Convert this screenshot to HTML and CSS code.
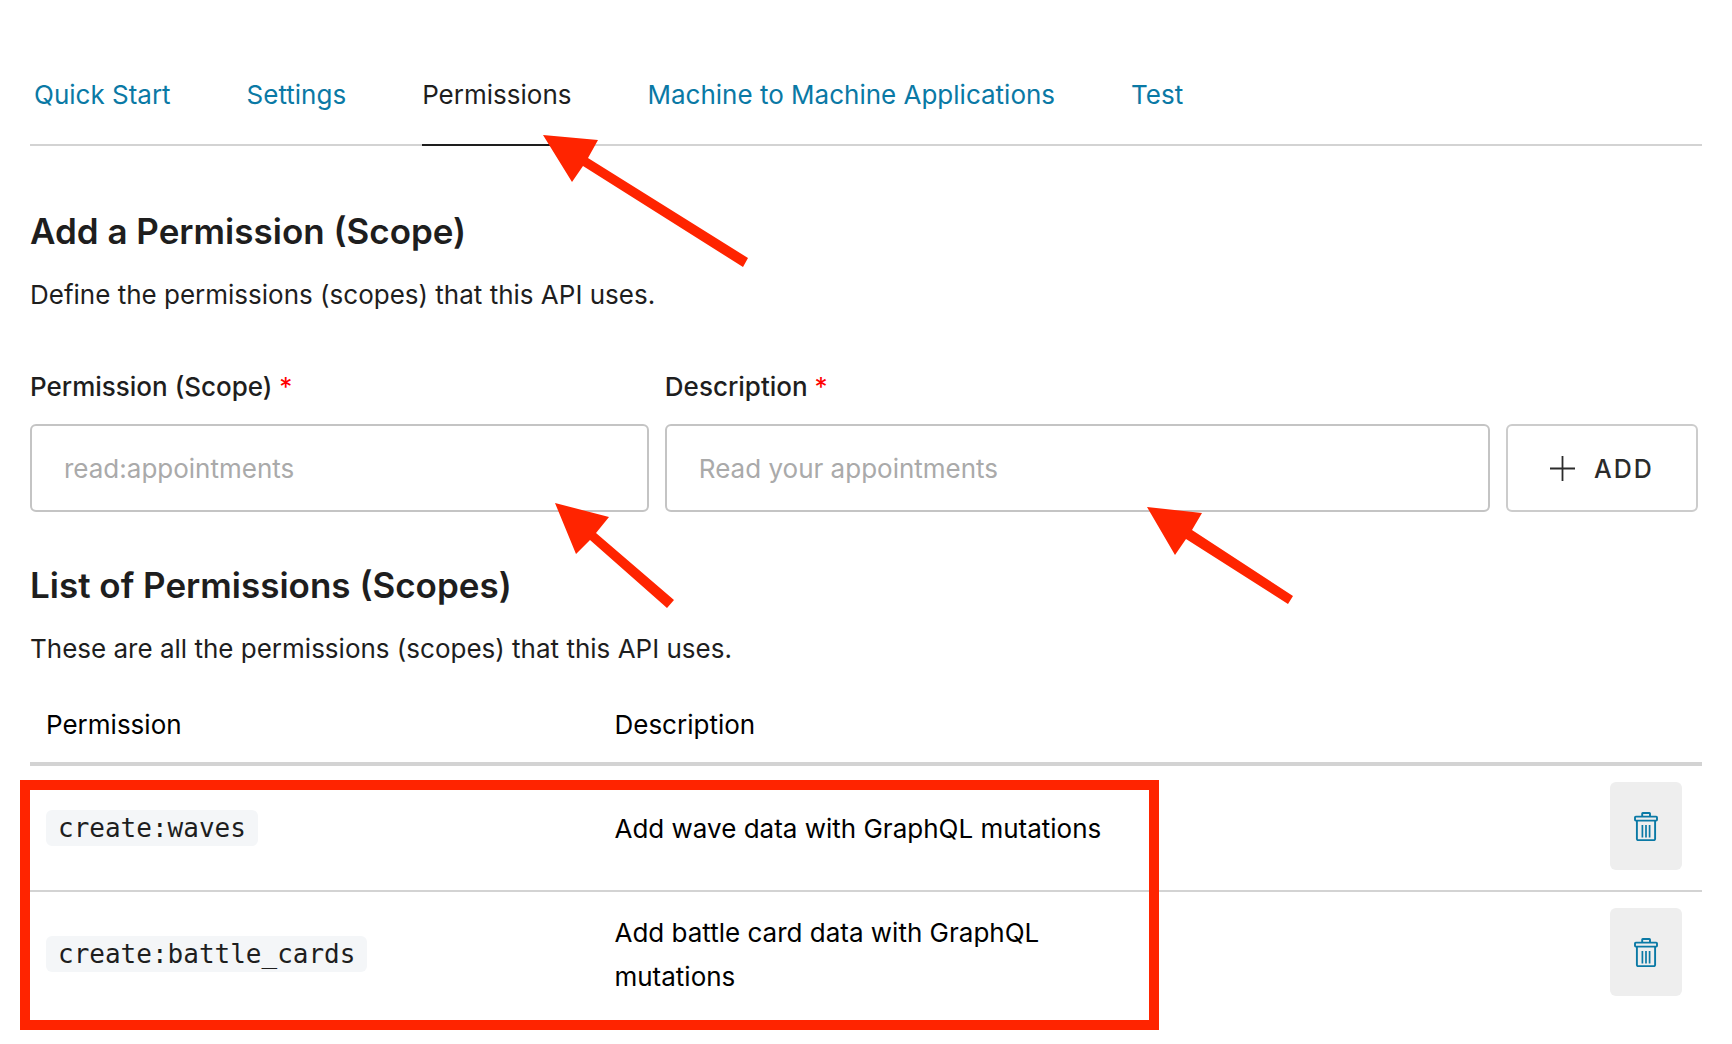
FILE: index.html
```
<!DOCTYPE html>
<html lang="en">
<head>
  <meta charset="utf-8">
  <meta name="viewport" content="width=device-width, initial-scale=1">
  <title>API Permissions</title>
  <link rel="stylesheet" href="styles.css">
</head>
<body>
  <svg class="sprite" aria-hidden="true">
    <symbol id="trash" viewBox="0 0 24 29">
      <g fill="none" stroke="currentColor" stroke-width="1.9">
        <path d="M8.2 4.4V1.6Q8.2 1 8.8 1h6.6q.6 0 .6.6v2.8"/>
        <rect x="1" y="4.6" width="22" height="4" rx="0.8"/>
        <path d="M2.9 8.6V27q0 1.1 1.1 1.1h16q1.1 0 1.1-1.1V8.6"/>
        <path d="M8.4 13v12.6M12 13v12.6M15.6 13v12.6" stroke-width="1.7"/>
      </g>
    </symbol>
  </svg>

  <main class="page">
    <nav class="tabs" aria-label="API sections">
      <a class="tab" href="#quick-start">Quick Start</a>
      <a class="tab" href="#settings">Settings</a>
      <a class="tab tab-active" href="#permissions" aria-current="page">Permissions</a>
      <a class="tab" href="#applications">Machine to Machine Applications</a>
      <a class="tab" href="#test">Test</a>
    </nav>

    <section class="section">
      <h2 class="heading">Add a Permission (Scope)</h2>
      <p class="lead">Define the permissions (scopes) that this API uses.</p>
      <form class="form">
        <div class="field">
          <label class="label" for="scope">Permission (Scope) <span class="required">*</span></label>
          <input class="input" id="scope" type="text" placeholder="read:appointments">
        </div>
        <div class="field">
          <label class="label" for="description">Description <span class="required">*</span></label>
          <input class="input" id="description" type="text" placeholder="Read your appointments">
        </div>
        <button class="add" type="button">
          <svg class="plus" viewBox="0 0 25 25" aria-hidden="true"><path d="M12.5 0v25M0 12.5h25" stroke="currentColor" stroke-width="1.8"/></svg>
          <span>ADD</span>
        </button>
      </form>
    </section>

    <section class="section section-list">
      <h2 class="heading">List of Permissions (Scopes)</h2>
      <p class="lead">These are all the permissions (scopes) that this API uses.</p>
      <table class="table">
        <thead>
          <tr><th class="col-text" scope="col">Permission</th><th class="col-text" scope="col">Description</th><td></td></tr>
        </thead>
        <tbody>
          <tr>
            <td><code class="code">create:waves</code></td>
            <td class="about">Add wave data with GraphQL mutations</td>
            <td class="actions"><button class="delete" type="button" aria-label="Delete create:waves"><svg class="trash"><use href="#trash"/></svg></button></td>
          </tr>
          <tr>
            <td><code class="code">create:battle_cards</code></td>
            <td class="about">Add battle card data with GraphQL mutations</td>
            <td class="actions"><button class="delete" type="button" aria-label="Delete create:battle_cards"><svg class="trash"><use href="#trash"/></svg></button></td>
          </tr>
        </tbody>
      </table>
    </section>

    <svg class="marks" aria-hidden="true">
      <g fill="#ff2400">
        <path d="M543 135l55 5-10 18 160 100-5 9-160-101-11 16z"/>
        <path d="M555 503l54 14-13 16 78 67-7 8-77-68-14 14z"/>
        <path d="M1147 507l55 6-10 17 101 66-5 8-102-65-11 16z"/>
      </g>
      <rect x="25" y="785" width="1129" height="240" fill="none" stroke="#ff2400" stroke-width="10"/>
    </svg>
  </main>
</body>
</html>
```
FILE: styles.css
```
* {
  box-sizing: border-box;
}

body {
  margin: 0;
  background: #fff;
  color: #1e1e1e;
  font: 26px/44px Inter, sans-serif;
}

.sprite {
  position: absolute;
  width: 0;
  height: 0;
}

.page {
  position: relative;
  padding: 73px 30px 24px;
}

.tabs {
  display: flex;
  gap: 76px;
  padding-left: 4px;
  box-shadow: inset 0 -2px #d3d3d3;
}

.tab {
  padding-bottom: 27px;
  border-bottom: 2px solid transparent;
  color: #0a79a5;
  text-decoration: none;
}

.tab-active {
  border-color: #1e1e1e;
  color: #1e1e1e;
}

.section {
  margin-top: 61px;
}

.section-list {
  margin-top: 49px;
}

.heading {
  margin: 0 0 18px;
  font-size: 35px;
  font-weight: 600;
  line-height: 48px;
}

.lead {
  margin: 0;
}

.form {
  display: grid;
  grid-template-columns: 3fr 4fr 192px;
  gap: 16px;
  align-items: end;
  margin: 48px 4px 0 0;
}

.field {
  display: flex;
  flex-direction: column;
  gap: 15px;
}

.label {
  font-weight: 500;
}

.required {
  color: #f00;
  font-weight: 400;
}

.input {
  width: 100%;
  height: 88px;
  padding: 0 32px;
  border: 2px solid #c4c4c4;
  border-radius: 6px;
  background: #fff;
  color: inherit;
  font: inherit;
}

.input::placeholder {
  color: #aaa;
  opacity: 1;
}

.add {
  display: flex;
  align-items: center;
  justify-content: center;
  gap: 19px;
  height: 88px;
  padding: 2px 0 0;
  border: 2px solid #ccc;
  border-radius: 6px;
  background: #fff;
  color: #2b2b2b;
  font: 500 25px/44px Inter, sans-serif;
  letter-spacing: 2px;
}

.plus {
  width: 25px;
  height: 25px;
  margin-bottom: 2px;
}

.table {
  width: 100%;
  margin-top: 15px;
  border-spacing: 0;
  table-layout: fixed;
  color: #000;
}

.table th,
.table td {
  padding: 16px;
  text-align: left;
  font-weight: 400;
}

.table th {
  padding: 17px 16px 15px;
}

.col-text {
  width: 34%;
}

.table thead th,
.table thead td {
  border-bottom: 4px solid #d3d3d3;
}

.table tbody tr + tr td {
  border-top: 2px solid #d3d3d3;
}

.table .about {
  padding: 18px 16px 16px;
}

.code {
  display: block;
  width: fit-content;
  padding: 1px 12px 0;
  border-radius: 6px;
  background: #f4f6f8;
  color: #1e1e1e;
  font: 26px/35px "DejaVu Sans Mono", monospace;
}

.table .actions {
  padding: 16px 20px 20px;
}

.delete {
  display: flex;
  align-items: center;
  justify-content: center;
  width: 72px;
  height: 88px;
  margin-left: auto;
  padding: 0;
  border: 0;
  border-radius: 6px;
  background: #eee;
  color: #0a79a5;
}

.trash {
  width: 24px;
  height: 29px;
}

.marks {
  position: absolute;
  top: 0;
  left: 0;
  width: 100%;
  height: 100%;
  pointer-events: none;
}
```
